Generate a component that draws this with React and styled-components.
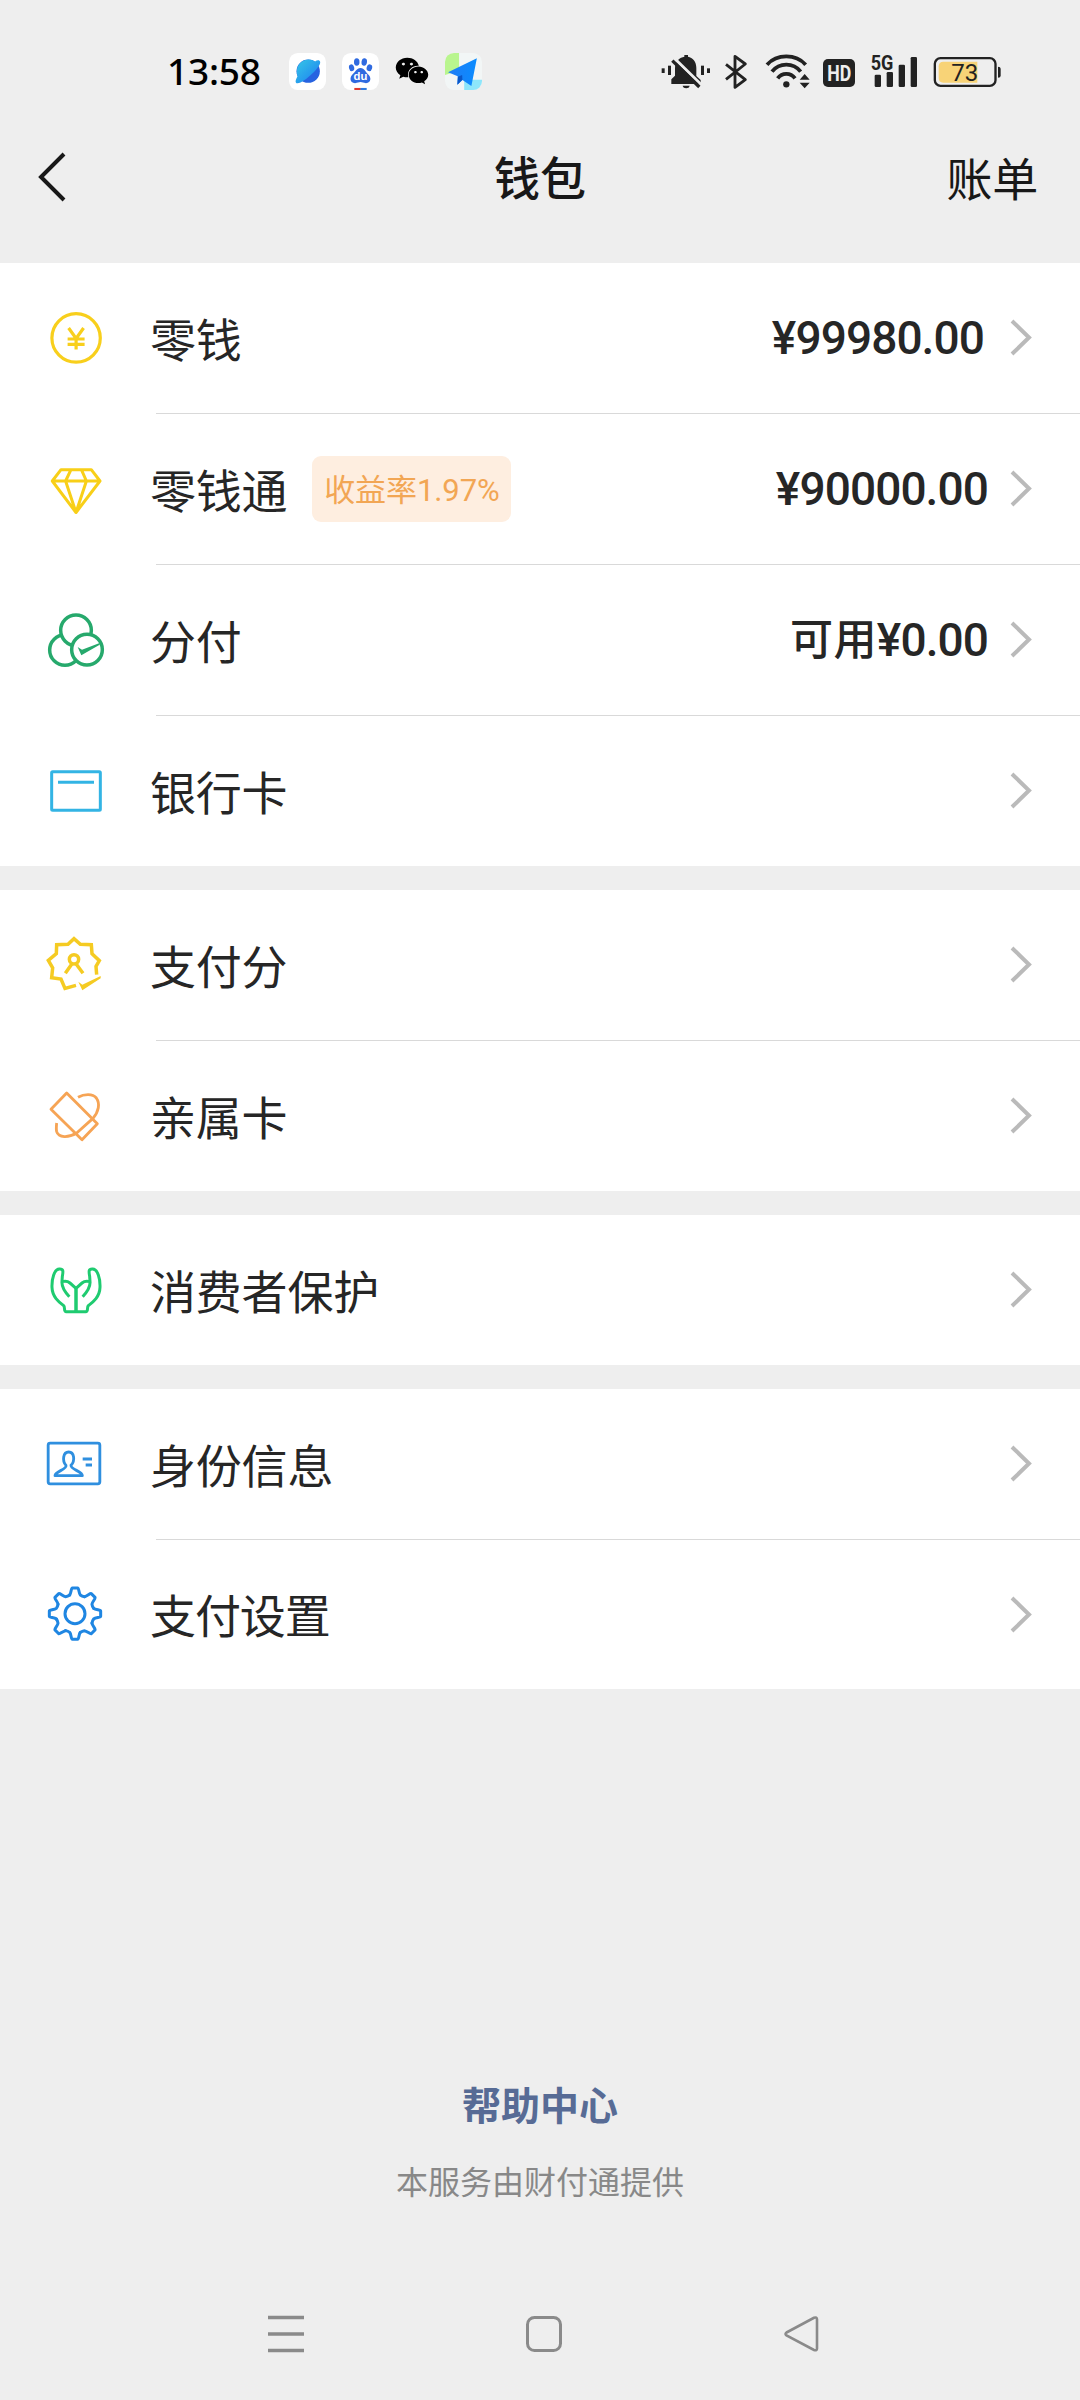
import React from "react";
import styled, { createGlobalStyle } from "styled-components";
import { FaWeixin } from "react-icons/fa";

/* ---------- status bar icons ---------- */

const BrowserIcon = () => (
  <svg width='37' height='37' viewBox='0 0 108 108'>
    <defs>
      <linearGradient id='planet' x1='0' y1='0' x2='1' y2='1'>
        <stop offset='0' stopColor='#35c8e6' />
        <stop offset='1' stopColor='#1c7cf2' />
      </linearGradient>
    </defs>
    <rect width='108' height='108' rx='26' fill='#fff' />
    <circle cx='56' cy='53' r='34' fill='#2763e0' />
    <path
      d='M22 88C16 84 22 74 25 68C17 44 32 19 57 19C65 19 71 21 76 25C82 20 90 20 91 26C92 34 82 46 68 60C50 77 32 91 22 88Z'
      fill='url(#planet)'
    />
  </svg>
);

const PawIcon = () => (
  <svg width='37' height='37' viewBox='0 0 108 108'>
    <rect width='108' height='108' rx='26' fill='#fff' />
    <g fill='#2f6ae0'>
      <ellipse cx='28' cy='43' rx='7.5' ry='10' transform='rotate(-15 28 43)' />
      <ellipse cx='43' cy='26' rx='8' ry='11' />
      <ellipse cx='65' cy='26' rx='8' ry='11' transform='rotate(8 65 26)' />
      <ellipse cx='80' cy='43' rx='8' ry='10' transform='rotate(15 80 43)' />
      <path d='M54 44C66 44 68 56 76 62C86 70 86 87 70 88C62 88 60 85 54 85C48 85 46 88 38 88C22 87 22 70 31 62C40 56 42 44 54 44Z' />
    </g>
    <text
      x='54'
      y='79'
      textAnchor='middle'
      fontFamily='Liberation Sans'
      fontWeight='700'
      fontSize='33'
      fill='#fff'
    >
      du
    </text>
    <rect x='36' y='102' width='19' height='6' fill='#e0382c' />
    <rect x='54' y='102' width='18' height='6' fill='#2f7be0' />
  </svg>
);

const PlaneIcon = () => (
  <svg width='37' height='37' viewBox='0 0 108 108'>
    <defs>
      <linearGradient id='plane' x1='0' y1='0' x2='1' y2='0'>
        <stop offset='0' stopColor='#1f7cf5' />
        <stop offset='1' stopColor='#0a8cff' />
      </linearGradient>
      <clipPath id='tile'>
        <rect width='108' height='108' rx='26' />
      </clipPath>
    </defs>
    <g clipPath='url(#tile)'>
      <rect width='108' height='108' fill='#f2f6f6' />
      <path d='M0 0H41V52L0 64Z' fill='#b9f58e' />
      <path d='M56 78H108V108H56Z' fill='#8de6fb' />
    </g>
    <path d='M93 15L9 56L37 68L36 93L51 79L77 96Z' fill='url(#plane)' />
    <path d='M50 64L38 69L36 93L51 78Z' fill='#0a58c8' />
  </svg>
);

const MuteIcon = () => (
  <svg width='52' height='38' viewBox='60 66 156 114' fill='#222'>
    <path d='M94 162V148L105 137V115C105 92 120 82 133 80V75H144V80C158 83 169 94 169 113V138L182 150V162Z' />
    <path d='M128 167H149C148 177 129 177 128 167Z' />
    <path d='M103 85L188 168' stroke='#eee' strokeWidth='9' />
    <path d='M97 92L178 171' stroke='#222' strokeWidth='10' />
    <rect x='65' y='115' width='9' height='14' />
    <rect x='84' y='107' width='9' height='28' />
    <rect x='183' y='107' width='9' height='28' />
    <rect x='201' y='115' width='9' height='14' />
  </svg>
);

const BluetoothIcon = () => (
  <svg width='24' height='38' viewBox='254 66 72 114' fill='none' stroke='#222' strokeWidth='8.500'>
    <path d='M260 103L318 149L287 172V79L318 102L260 148' strokeLinejoin='round' />
  </svg>
);

const WifiIcon = () => (
  <svg width='46' height='38' viewBox='376 66 138 114'>
    <g fill='none' stroke='#222' strokeWidth='11.5'>
      <path d='M382 104C412 71 468 71 498 104' />
      <path d='M397 125C419 97 461 97 483 125' />
      <path d='M414 145C427 127 453 127 466 145' />
    </g>
    <circle cx='440' cy='163' r='9.5' fill='#222' />
    <path d='M495 132L510 149H480ZM495 175L510 158H480Z' fill='#222' />
  </svg>
);

const HdIcon = () => (
  <svg width='34' height='38' viewBox='546 66 102 114'>
    <rect x='549' y='87' width='96' height='84' rx='15' fill='#222' />
    <text
      x='598'
      y='152'
      textAnchor='middle'
      textLength='72'
      lengthAdjust='spacingAndGlyphs'
      fontFamily='Roboto'
      fontWeight='700'
      fontSize='64'
      fill='#eee'
    >
      HD
    </text>
  </svg>
);

const SignalIcon = () => (
  <svg width='48' height='38' viewBox='693 66 144 114' fill='#222'>
    <text
      x='695'
      y='119'
      textLength='68'
      lengthAdjust='spacingAndGlyphs'
      fontFamily='Roboto'
      fontWeight='700'
      fontSize='60'
    >
      5G
    </text>
    <rect x='707' y='134' width='19' height='37' rx='4' />
    <rect x='743' y='126' width='19' height='45' rx='4' />
    <rect x='779' y='104' width='19' height='67' rx='4' />
    <rect x='815' y='81' width='19' height='90' rx='4' />
  </svg>
);

const BatteryIcon = () => (
  <svg width='68' height='38' viewBox='880 66 204 114'>
    <rect x='885.5' y='84.5' width='182' height='83' rx='17' fill='none' stroke='#222' strokeWidth='7' />
    <path d='M911 95H1013V158H911Q897 158 897 144V109Q897 95 911 95Z' fill='#f8d377' />
    <path d='M1075 110Q1083 110 1083 116V137Q1083 143 1075 143Z' fill='#222' />
    <text
      x='975'
      y='153'
      textAnchor='middle'
      fontFamily='Roboto'
      fontSize='72'
      fill='#222'
    >
      73
    </text>
  </svg>
);

/* ---------- list icons ---------- */

const RowSvg = ({ color, weight = 9, viewBox = "135 120 180 180", children }) => (
  <svg
    width='60'
    height='60'
    viewBox={viewBox}
    fill='none'
    stroke={color}
    strokeWidth={weight}
    strokeLinejoin='round'
  >
    {children}
  </svg>
);

const CoinIcon = () => (
  <RowSvg color='#f8cf1c' weight={3.2} viewBox='0 0 60 60'>
    <circle cx='31.1' cy='29.9' r='24.2' />
    <path d='M23.6 20L31.1 30.4L38.6 20M31.1 30.4V41.4M22.6 31H39.6M22.6 36.4H39.6' strokeWidth='3.200' strokeLinejoin='miter' />
  </RowSvg>
);

const DiamondIcon = () => (
  <RowSvg color='#f8cf18' weight={3} viewBox='0 0 60 60'>
    <path d='M16 10.7H46.3L55 22L31 53.5L7.3 22ZM7.3 22H55M26 10.7L20.6 22L31 53.5L41.4 22L36.4 10.7' />
  </RowSvg>
);

const CirclesIcon = () => (
  <RowSvg color='#26a96c' weight={10.5}>
    <circle cx='195' cy='240' r='46' />
    <circle cx='228' cy='181' r='46' fill='#fff' />
    <circle cx='261' cy='239' r='46' fill='#fff' />
    <path d='M233 231L246 239L299 219V224L244 256Z' fill='#26a96c' stroke='none' />
  </RowSvg>
);

const BankCardIcon = () => (
  <RowSvg color='#33b4e4' viewBox='135 573 180 180'>
    <rect x='155' y='605' width='146' height='116' rx='3' />
    <path d='M174 637H282' />
  </RowSvg>
);

const ScoreIcon = () => (
  <RowSvg color='#f5cb22' weight={10.5} viewBox='135 105 180 180'>
    <g strokeLinejoin='miter'>
      <path d='M228 256L195 265L183 237L155 233L158 204L145 181L169 161L170 134L204 133L222 116L241 133L274 134L276 161L298 182L288 199L290 224' />
      <circle cx='222' cy='178' r='14' />
      <path d='M196 220L215 193M249 220L229 193' />
    </g>
    <path d='M235 245L247 254L302 228V235L247 271Z' fill='#f5cb22' stroke='none' />
  </RowSvg>
);

const FamilyCardIcon = () => (
  <RowSvg color='#f6a455' weight={8.5} viewBox='135 558 180 180'>
    <path d='M200 579L292 671L246 719L153 628Z' />
    <path d='M234 592C252 582 278 580 289 594C301 611 296 635 279 655L230 699C205 714 176 714 170 695C168 688 169 680 170 669' />
  </RowSvg>
);

const Hand = () => (
  <path d='M228 335H199C190 335 196 322 191 317C177 306 157 291 156 262C155 235 163 208 178 207C192 206 189 217 187 229L186 244C184 262 194 275 208 290M186 245C196 242 203 243 210 249L228 265V335' />
);

const HandsIcon = () => (
  <RowSvg color='#1fcb70' weight={9} viewBox='135 180 180 180'>
    <Hand />
    <g transform='translate(456 0) scale(-1 1)'>
      <Hand />
    </g>
  </RowSvg>
);

const IdIcon = () => (
  <RowSvg color='#2f8fdf' weight={8.5} viewBox='135 132 180 180'>
    <rect x='144.500' y='159.500' width='155' height='122' rx='6' />
    <path d='M198 226C186 212 189 186 206 186C223 186 226 212 213 226C211 239 247 243 247 257H165C165 244 201 239 198 226Z' />
    <path d='M248 207H276M257 225H276' />
  </RowSvg>
);

const teeth = [0, 45, 90, 135, 180, 225, 270, 315];

// one tooth plus the valley that leads to the next, rotated round the hub
const GearIcon = () => (
  <RowSvg color='#1f86e2' viewBox='135 585 180 180'>
    <circle cx='225' cy='671' r='30' />
    {teeth.map((deg) => (
      <path
        key={deg}
        strokeLinecap='round'
        transform={`translate(225 671) rotate(${deg})`}
        d='M-16 -56C-11 -62 -12 -77 -8 -77H8C12 -77 11 -62 16 -56Q21 -52 28.300 -50.900'
      />
    ))}
  </RowSvg>
);

/* ---------- page ---------- */

const groups = [
  [
    { name: "零钱", Icon: CoinIcon, value: "¥99980.00", inset: 26 },
    { name: "零钱通", Icon: DiamondIcon, value: "¥90000.00", tag: "收益率1.97%" },
    { name: "分付", Icon: CirclesIcon, value: "¥0.00", prefix: "可用" },
    { name: "银行卡", Icon: BankCardIcon },
  ],
  [
    { name: "支付分", Icon: ScoreIcon },
    { name: "亲属卡", Icon: FamilyCardIcon },
  ],
  [{ name: "消费者保护", Icon: HandsIcon }],
  [
    { name: "身份信息", Icon: IdIcon },
    { name: "支付设置", Icon: GearIcon, spacing: "-1.1px", height: 149 },
  ],
];

const Row = ({ item }) => {
  const { name, Icon, value, tag, prefix, inset, spacing, height } = item;
  return (
    <RowWrapper>
      <IconBox>
        <Icon />
      </IconBox>
      <RowBody $height={height}>
        <Label $spacing={spacing}>{name}</Label>
        {tag && <Tag>{tag}</Tag>}
        <Value $inset={inset}>
          {prefix && <Prefix>{prefix}</Prefix>}
          {value}
        </Value>
        <svg width='22' height='38' viewBox='0 0 22 38' fill='none' stroke='#bababa' strokeWidth='4'>
          <path d='M2 2L19 18.500L2 35' />
        </svg>
      </RowBody>
    </RowWrapper>
  );
};

export default function App() {
  return (
    <Page>
      <GlobalStyle />
      <StatusBar>
        <Clock>13:58</Clock>
        <AppIcons>
          <BrowserIcon />
          <PawIcon />
          <FaWeixin size={34} color='#000' />
          <PlaneIcon />
        </AppIcons>
        <SystemIcons>
          <MuteIcon />
          <BluetoothIcon />
          <WifiIcon />
          <HdIcon />
          <SignalIcon />
          <BatteryIcon />
        </SystemIcons>
      </StatusBar>

      <Header>
        <svg width='32' height='52' viewBox='0 0 32 52' fill='none' stroke='#181818' strokeWidth='4'>
          <path d='M27 3L4 26L27 49' />
        </svg>
        <Title>钱包</Title>
        <Bill>账单</Bill>
      </Header>

      <Groups>
        {groups.map((rows) => (
          <Group key={rows[0].name}>
            {rows.map((item) => (
              <Row key={item.name} item={item} />
            ))}
          </Group>
        ))}
      </Groups>

      <Footer>
        <HelpLink>帮助中心</HelpLink>
        <Provider>本服务由财付通提供</Provider>
      </Footer>

      <NavBar>
        <svg width='36' height='38' viewBox='0 0 36 38' stroke='#8a8a8a' strokeWidth='3.400'>
          <path d='M0 2.500H36M0 19H36M0 35.500H36' />
        </svg>
        <svg width='36' height='38' viewBox='0 0 36 38' fill='none' stroke='#8a8a8a' strokeWidth='3'>
          <rect x='1.500' y='2.500' width='33' height='33' rx='7' />
        </svg>
        <svg width='36' height='38' viewBox='0 0 36 38' fill='none' stroke='#8a8a8a' strokeWidth='2.600'>
          <path d='M2.500 17.500L30 2.800Q33 1.800 33 4.500V33.500Q33 36 30 35L2.500 20.500Q0.500 19 2.500 17.500Z' />
        </svg>
      </NavBar>
    </Page>
  );
}

const GlobalStyle = createGlobalStyle`
  body {
    margin: 0;
    background: #eeeeee;
  }
  svg {
    display: block;
    flex: none;
  }
`;

const Page = styled.div`
  display: flex;
  flex-direction: column;
  width: 1080px;
  height: 2400px;
  background: #eeeeee;
  color: #262626;
  font-family: "Noto Sans CJK SC", sans-serif;
`;

const StatusBar = styled.div`
  display: flex;
  align-items: center;
  box-sizing: border-box;
  height: 142px;
  padding: 0 79px 0 167px;
`;

const Clock = styled.div`
  width: 122px;
  color: #000;
  font-family: "Noto Sans", sans-serif;
  font-size: 37px;
  font-weight: 500;
  letter-spacing: -0.2px;
  line-height: 40px;
`;

const AppIcons = styled.div`
  display: flex;
  align-items: center;
  gap: 16px;
`;

const SystemIcons = styled.div`
  display: flex;
  align-items: center;
  margin-left: auto;

  svg:nth-child(2) {
    margin: 0 17px 0 12px;
  }
  svg:nth-child(4) {
    margin: 0 14px 0 11px;
  }
  svg:nth-child(6) {
    margin-left: 15px;
  }
`;

const Header = styled.div`
  display: grid;
  grid-template-columns: 200px 1fr 200px;
  align-items: center;
  box-sizing: border-box;
  height: 121px;
  padding: 0 42px 54px 37px;
  font-size: 46px;
  line-height: 66px;
`;

const Title = styled.div`
  padding: 0 0 4px 5px;
  color: #181818;
  font-weight: 500;
  text-align: center;
`;

const Bill = styled.div`
  padding-bottom: 3px;
  color: #181818;
  letter-spacing: -0.3px;
  text-align: right;
`;

const Groups = styled.div`
  display: flex;
  flex-direction: column;
  gap: 24px;
`;

const Group = styled.div`
  background: #fff;
`;

const RowBody = styled.div`
  display: flex;
  flex: 1;
  align-items: center;
  height: ${(props) => props.$height || 150}px;
  padding-right: 48px;
`;

const RowWrapper = styled.div`
  display: flex;

  /* hairline starts past the icon column */
  &:not(:last-child) {
    padding-bottom: 1px;
    background: linear-gradient(#d9d9d9, #d9d9d9) 156px 100% / 100% 1px no-repeat;
  }
`;

const IconBox = styled.div`
  display: flex;
  align-items: center;
  padding: 0 45px;
`;

const Label = styled.div`
  padding-bottom: 3px;
  font-size: 46px;
  line-height: 66px;
  letter-spacing: ${(props) => props.$spacing || "-0.2px"};
`;

const Tag = styled.div`
  box-sizing: border-box;
  width: 199px;
  height: 66px;
  margin-left: 25px;
  border-radius: 9px;
  background: #feeee0;
  color: #f2a654;
  font-family: Roboto, "Noto Sans CJK SC", sans-serif;
  font-size: 31px;
  line-height: 70px;
  letter-spacing: -0.1px;
  text-align: center;
`;

const Value = styled.div`
  display: flex;
  align-items: center;
  margin-left: auto;
  padding-right: ${(props) => props.$inset || 22}px;
  font-family: Roboto, "Noto Sans CJK SC", sans-serif;
  font-size: 46px;
  font-weight: 500;
  line-height: 60px;
  letter-spacing: -0.9px;
`;

const Prefix = styled.span`
  font-size: 43px;
  letter-spacing: 0.4px;
`;

const Footer = styled.div`
  display: flex;
  flex-direction: column;
  align-items: center;
  margin-top: 384px;
`;

const HelpLink = styled.div`
  color: #576b95;
  font-size: 39px;
  font-weight: 700;
  line-height: 60px;
`;

const Provider = styled.div`
  margin-top: 24px;
  color: #888;
  font-size: 32px;
  line-height: 46px;
`;

const NavBar = styled.div`
  display: flex;
  justify-content: space-between;
  margin-top: auto;
  padding: 0 260px 47px 268px;
`;
